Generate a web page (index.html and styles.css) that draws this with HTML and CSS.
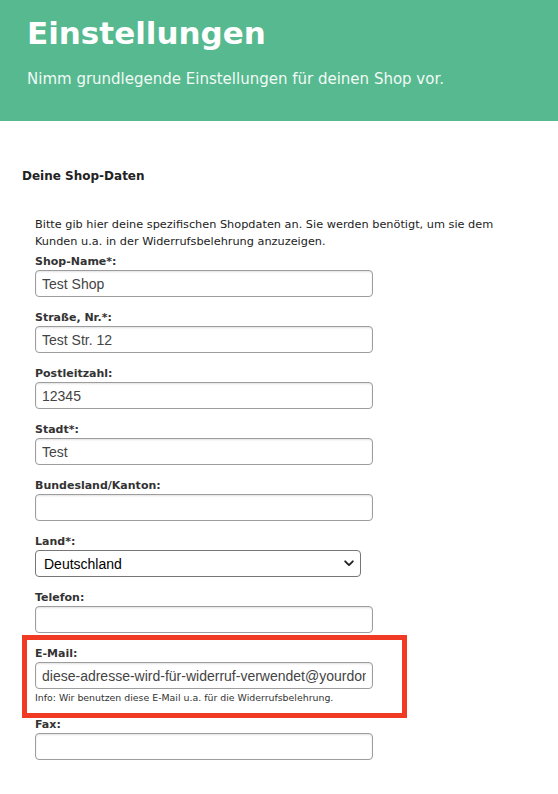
FILE: index.html
```html
<!DOCTYPE html>
<html lang="de">
<head>
  <meta charset="UTF-8">
  <meta name="viewport" content="width=device-width, initial-scale=1.0">
  <title>Einstellungen</title>
  <link rel="stylesheet" href="styles.css">
</head>
<body>
  <header class="page-header">
    <h1>Einstellungen</h1>
    <p>Nimm grundlegende Einstellungen für deinen Shop vor.</p>
  </header>

  <section class="settings">
    <h2>Deine Shop-Daten</h2>

    <div class="fields">
      <p class="intro">Bitte gib hier deine spezifischen Shopdaten an. Sie werden benötigt, um sie dem Kunden u.a. in der Widerrufsbelehrung anzuzeigen.</p>

      <div class="field">
        <label for="shopname">Shop-Name*:</label>
        <input type="text" id="shopname" value="Test Shop">
      </div>

      <div class="field">
        <label for="strasse">Straße, Nr.*:</label>
        <input type="text" id="strasse" value="Test Str. 12">
      </div>

      <div class="field">
        <label for="plz">Postleitzahl:</label>
        <input type="text" id="plz" value="12345">
      </div>

      <div class="field">
        <label for="stadt">Stadt*:</label>
        <input type="text" id="stadt" value="Test">
      </div>

      <div class="field">
        <label for="bundesland">Bundesland/Kanton:</label>
        <input type="text" id="bundesland">
      </div>

      <div class="field">
        <label for="land">Land*:</label>
        <div class="select-wrap">
          <select id="land">
            <option>Deutschland</option>
            <option>Österreich</option>
            <option>Schweiz</option>
          </select>
          <svg class="chevron" width="10" height="7" viewBox="0 0 10 7"><path d="M1.2 1.3 L5 5.1 L8.8 1.3" fill="none" stroke="#222" stroke-width="1.9" stroke-linecap="round" stroke-linejoin="round"/></svg>
        </div>
      </div>

      <div class="field">
        <label for="telefon">Telefon:</label>
        <input type="text" id="telefon">
      </div>

      <div class="field marked">
        <label for="email">E-Mail:</label>
        <input type="text" id="email" value="diese-adresse-wird-für-widerruf-verwendet@yourdomain.de">
        <p class="hint">Info: Wir benutzen diese E-Mail u.a. für die Widerrufsbelehrung.</p>
      </div>

      <div class="field">
        <label for="fax">Fax:</label>
        <input type="text" id="fax">
      </div>
    </div>
  </section>
</body>
</html>
```

FILE: styles.css
```css
body {
  margin: 0;
  font-family: "DejaVu Sans", Verdana, sans-serif;
  color: #333;
  background: #fff;
}

.page-header {
  background-color: #56b98f;
  color: #fff;
  padding: 15px 27px 32px;
}

.page-header h1 {
  margin: 0;
  font-size: 31px;
  line-height: 36px;
  font-weight: bold;
}

.page-header p {
  margin: 18px 0 0;
  font-size: 15px;
  line-height: 20px;
  color: #f2faf6;
}

.settings {
  padding: 47px 0 0 22px;
}

.settings h2 {
  margin: 0;
  font-size: 12px;
  line-height: 16px;
  font-weight: bold;
  color: #222;
}

.fields {
  padding: 32px 0 0 13px;
}

.intro {
  margin: 0 0 4px;
  width: 480px;
  font-size: 11.3px;
  line-height: 17px;
  color: #222;
}

.field {
  margin-bottom: 13px;
}

.field label {
  display: block;
  font-size: 11px;
  line-height: 16px;
  font-weight: bold;
  color: #333;
}

.field input {
  display: block;
  box-sizing: border-box;
  width: 338px;
  height: 27px;
  margin: 0;
  padding: 0 6px;
  border: 1px solid #9d9d9d;
  border-radius: 4px;
  box-shadow: inset 0 1px 2px rgba(0, 0, 0, 0.12);
  font-family: "Liberation Sans", Arial, sans-serif;
  font-size: 14px;
  color: #444;
  background: #fff;
}

.select-wrap {
  position: relative;
  width: 326px;
}

.select-wrap select {
  display: block;
  box-sizing: border-box;
  width: 326px;
  height: 27px;
  margin: 0;
  padding: 0 8px;
  border: 1px solid #767676;
  border-radius: 4px;
  background: #fff;
  font-family: "Liberation Sans", Arial, sans-serif;
  font-size: 14px;
  color: #000;
  -webkit-appearance: none;
  appearance: none;
}

.chevron {
  position: absolute;
  right: 7px;
  top: 10px;
  pointer-events: none;
}

.hint {
  margin: 3px 0 2px;
  font-size: 9.4px;
  line-height: 12px;
  color: #333;
}

.marked {
  position: relative;
}

.marked::after {
  content: "";
  position: absolute;
  top: -11px;
  left: -13px;
  width: 385px;
  height: 83px;
  box-sizing: border-box;
  border: 5px solid #f03a24;
  pointer-events: none;
}
```
